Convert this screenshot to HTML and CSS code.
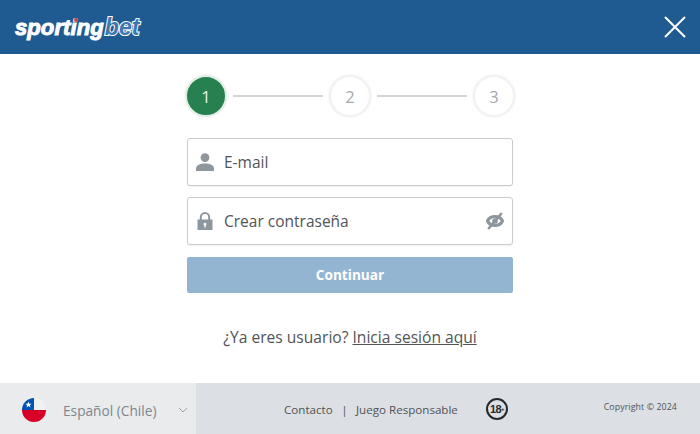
FILE: index.html
```html
<!DOCTYPE html>
<html>

<head>
    <title>Sportingbet</title>
    <link rel="stylesheet" href="styles.css">
</head>

<body>
    <div class="header">
        <div class="logo"><span class="logo-sporting">sporting</span><span class="logo-bet">bet</span><span class="logo-dot"></span></div>
        <svg class="close" width="22" height="22" viewBox="0 0 22 22">
            <path d="M1 1L21 21M21 1L1 21" stroke="#fff" stroke-width="2" fill="none" />
        </svg>
    </div>

    <div class="main">
        <div class="steps">
            <div class="step active">1</div>
            <div class="step-line"></div>
            <div class="step">2</div>
            <div class="step-line"></div>
            <div class="step">3</div>
        </div>

        <div class="field">
            <svg class="field-icon" width="18" height="18" viewBox="0 0 18 18">
                <circle cx="9" cy="4.6" r="4.4" fill="#8e969e" />
                <path d="M0 18V15.5C0 12 4 10.4 9 10.4S18 12 18 15.5V18Z" fill="#8e969e" />
            </svg>
            <span class="field-label">E-mail</span>
        </div>

        <div class="field">
            <svg class="field-icon" width="18" height="18" viewBox="0 0 18 18">
                <path d="M4.8 8V5.300a4.200 4.200 0 0 1 8.400 0V8" stroke="#8e969e" stroke-width="2" fill="none" />
                <path fill-rule="evenodd" d="M1.500 7.500H16.500V18H1.500ZM9 10.800a1.500 1.500 0 0 0-.7 2.800V15.500h1.400V13.600A1.500 1.500 0 0 0 9 10.800Z" fill="#8e969e" />
            </svg>
            <span class="field-label">Crear contraseña</span>
            <svg class="eye" width="18" height="18" viewBox="0 0 18 18">
                <path d="M1.500 9C3 5.700 5.800 4.500 9 4.500S15 5.700 16.500 9C15 12.300 12.200 13.500 9 13.500S3 12.300 1.500 9Z" stroke="#8e969e" stroke-width="3.200" fill="none" />
                <circle cx="9" cy="9" r="2.800" fill="#8e969e" />
                <path d="M15.800 1L2.200 17" stroke="#8e969e" stroke-width="2.600" />
            </svg>
        </div>

        <button class="continue">Continuar</button>

        <p class="login">¿Ya eres usuario? <a href="#">Inicia sesión aquí</a></p>
    </div>

    <div class="footer">
        <div class="language">
            <svg class="flag" width="24" height="24" viewBox="0 0 24 24">
                <defs>
                    <clipPath id="flagClip">
                        <circle cx="12" cy="12" r="12" />
                    </clipPath>
                </defs>
                <g clip-path="url(#flagClip)">
                    <rect width="24" height="12" fill="#f0f0f0" />
                    <rect y="12" width="24" height="12" fill="#d80027" />
                    <rect width="12" height="12" fill="#0052b4" />
                    <polygon points="6.500,3.500 7.300,5.800 9.700,5.800 7.800,7.200 8.500,9.500 6.500,8.100 4.500,9.500 5.200,7.200 3.300,5.800 5.700,5.800" fill="#fff" />
                </g>
            </svg>
            <span class="language-name">Español (Chile)</span>
            <svg class="chevron" width="10" height="6" viewBox="0 0 10 6">
                <path d="M1 1L5 5L9 1" stroke="#9aa1a8" stroke-width="1" fill="none" />
            </svg>
        </div>
        <div class="footer-right">
            <div class="footer-links">
                <a href="#">Contacto</a>
                <span class="sep">|</span>
                <a href="#">Juego Responsable</a>
            </div>
            <div class="age">18<span class="age-plus">+</span></div>
            <div class="copyright">Copyright © 2024</div>
        </div>
    </div>
</body>

</html>
```

FILE: styles.css
```css
* {
    box-sizing: border-box;
}

html,
body {
    height: 100%;
}

body {
    margin: 0;
    display: flex;
    flex-direction: column;
    background-color: #ffffff;
    font-family: "Open Sans", "Noto Sans", sans-serif;
    color: #515457;
    overflow: hidden;
}

a {
    color: inherit;
}

/* header */
.header {
    height: 54px;
    flex-shrink: 0;
    display: flex;
    align-items: center;
    justify-content: space-between;
    padding: 0 14px 0 15px;
    background-color: #1f5a91;
}

.logo {
    position: relative;
    font-family: "Liberation Sans", Arial, sans-serif;
    font-size: 22px;
    font-weight: bold;
    font-style: italic;
    letter-spacing: 0.1px;
    color: #ffffff;
    -webkit-text-stroke: 1px #ffffff;
}

.logo-bet {
    margin-left: 1px;
    font-size: 23px;
    color: #3f78b0;
    -webkit-text-stroke: 2px #ffffff;
    paint-order: stroke fill;
}

.logo-dot {
    position: absolute;
    left: 59px;
    top: 4px;
    width: 4px;
    height: 4px;
    border-radius: 50%;
    background-color: #c8464f;
}

/* stepper */
.main {
    flex: 1;
    display: flex;
    flex-direction: column;
    align-items: center;
    padding-top: 21px;
}

.steps {
    display: flex;
    align-items: center;
    gap: 6px;
    width: 330px;
    height: 42px;
    margin-bottom: 21px;
}

.step {
    width: 42px;
    height: 42px;
    flex-shrink: 0;
    display: flex;
    align-items: center;
    justify-content: center;
    border: 2px solid #f1f1f1;
    border-radius: 50%;
    box-shadow: 0 0 2px rgba(0, 0, 0, 0.12);
    font-size: 16.5px;
    color: #a5a9ad;
}

.step.active {
    background-color: #27804f;
    border-color: #e2efe7;
    color: #e8f4ec;
}

.step-line {
    flex: 1;
    height: 2px;
    background-color: #d2d4d6;
}

/* form */
.field {
    width: 326px;
    height: 48px;
    flex-shrink: 0;
    display: flex;
    align-items: center;
    gap: 10px;
    padding: 0 8px 0 8px;
    margin-bottom: 11px;
    border: 1px solid #c9cccf;
    border-radius: 3px;
    background-color: #ffffff;
    box-shadow: 0 1px 1px rgba(0, 0, 0, 0.06);
}

.field-label {
    flex: 1;
    font-size: 15.5px;
    line-height: 20px;
    margin-top: -1px;
}

.continue {
    width: 326px;
    height: 36px;
    flex-shrink: 0;
    margin-top: 1px;
    padding-bottom: 2px;
    border: none;
    border-radius: 2px;
    background-color: #94b5d1;
    color: #ffffff;
    font-family: "Open Sans", "Noto Sans", sans-serif;
    font-size: 13.6px;
    font-weight: bold;
}

.login {
    margin: 33px 0 0;
    font-size: 15.6px;
    line-height: 22px;
}

/* footer */
.footer {
    height: 51px;
    flex-shrink: 0;
    display: flex;
    background-color: #dcdfe3;
}

.language {
    width: 196px;
    display: flex;
    align-items: center;
    padding: 3px 0 0 22px;
    background-color: #e9ebed;
}

.language-name {
    margin-left: 17px;
    font-size: 13.7px;
    color: #80868c;
}

.chevron {
    margin-left: 22px;
}

.footer-right {
    flex: 1;
    display: flex;
    align-items: center;
    padding: 1px 23px 0 88px;
}

.footer-links {
    display: flex;
    gap: 8.5px;
    font-size: 11.6px;
}

.footer-links a {
    text-decoration: none;
}

.age {
    width: 22px;
    height: 22px;
    margin-left: 28px;
    display: flex;
    align-items: center;
    justify-content: center;
    border: 2px solid #26292d;
    border-radius: 50%;
    font-family: "Liberation Sans", Arial, sans-serif;
    font-size: 11px;
    font-weight: bold;
    letter-spacing: -0.7px;
    color: #26292d;
}

.age-plus {
    font-size: 6px;
}

.copyright {
    margin-left: auto;
    margin-bottom: 5px;
    font-size: 8.8px;
    letter-spacing: 0.1px;
}
```
